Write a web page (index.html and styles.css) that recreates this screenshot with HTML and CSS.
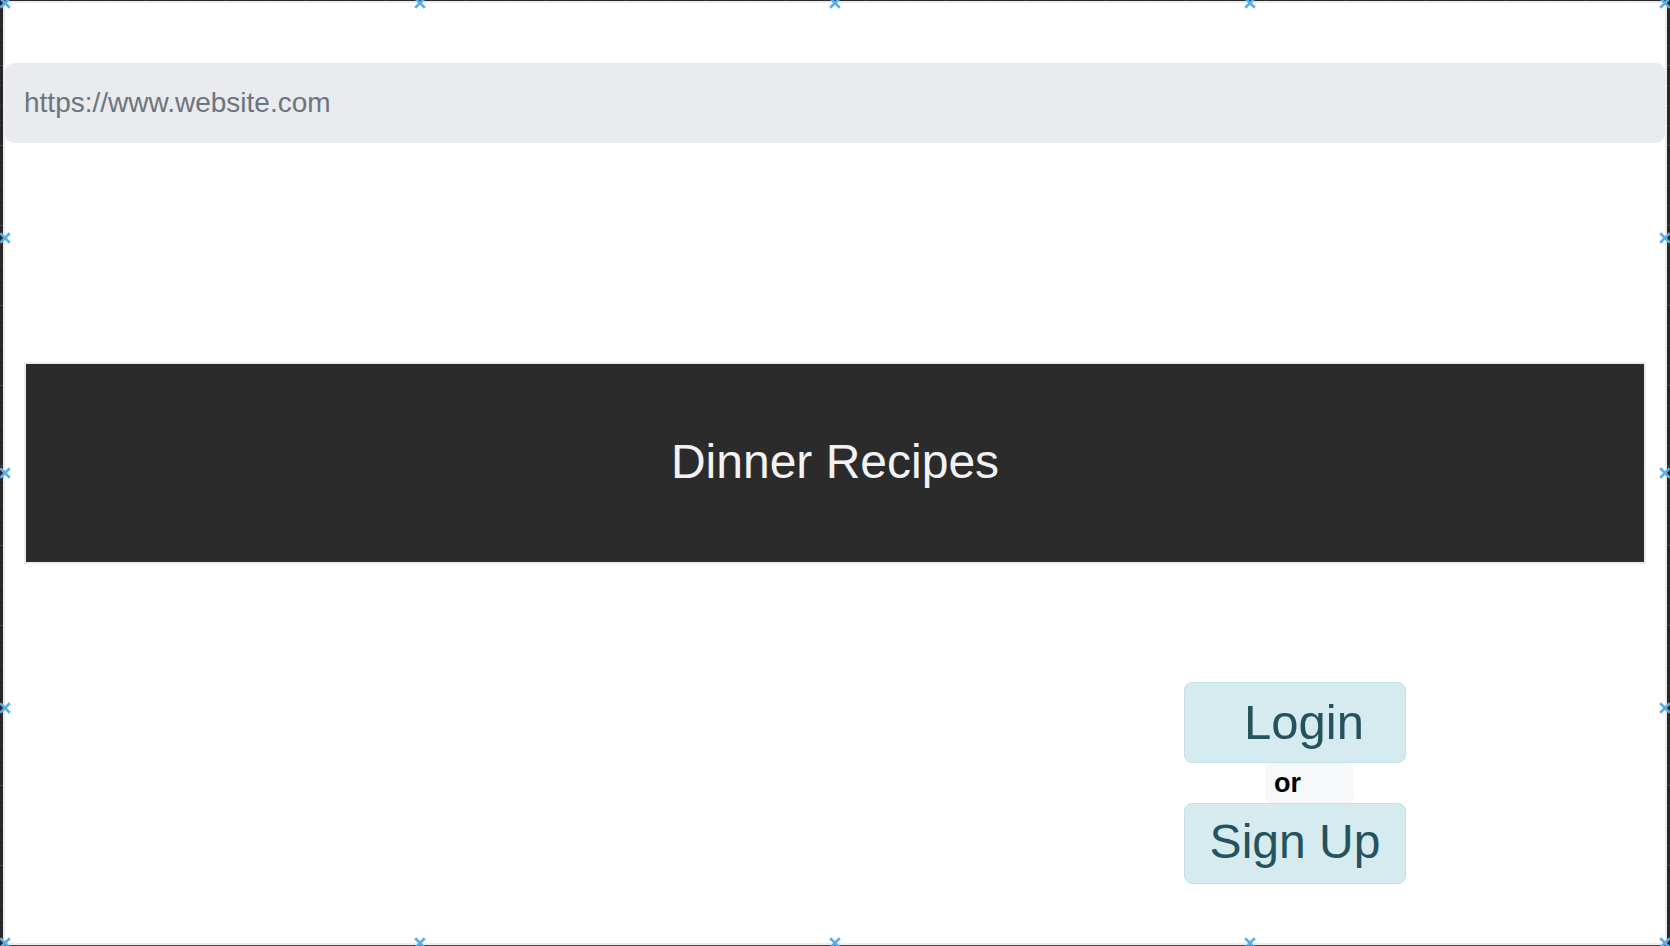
FILE: index.html
```html
<!DOCTYPE html>
<html lang="en">
<head>
<meta charset="utf-8">
<title>Dinner Recipes</title>
<link rel="stylesheet" href="styles.css">
</head>
<body>
<div class="frame">
  <div class="urlbar">https://www.website.com</div>
  <div class="banner">Dinner Recipes</div>
  <div class="actions">
    <div class="auth">
      <div class="btn btn-login">Login</div>
      <div class="or">or</div>
      <div class="btn btn-signup">Sign Up</div>
    </div>
  </div>
  <div class="handles">
    <svg class="h x0 y0" viewBox="0 0 10 10"><path d="M1 1L9 9M9 1L1 9"/></svg>
    <svg class="h x1 y0" viewBox="0 0 10 10"><path d="M1 1L9 9M9 1L1 9"/></svg>
    <svg class="h x2 y0" viewBox="0 0 10 10"><path d="M1 1L9 9M9 1L1 9"/></svg>
    <svg class="h x3 y0" viewBox="0 0 10 10"><path d="M1 1L9 9M9 1L1 9"/></svg>
    <svg class="h x4 y0" viewBox="0 0 10 10"><path d="M1 1L9 9M9 1L1 9"/></svg>
    <svg class="h x0 y4" viewBox="0 0 10 10"><path d="M1 1L9 9M9 1L1 9"/></svg>
    <svg class="h x1 y4" viewBox="0 0 10 10"><path d="M1 1L9 9M9 1L1 9"/></svg>
    <svg class="h x2 y4" viewBox="0 0 10 10"><path d="M1 1L9 9M9 1L1 9"/></svg>
    <svg class="h x3 y4" viewBox="0 0 10 10"><path d="M1 1L9 9M9 1L1 9"/></svg>
    <svg class="h x4 y4" viewBox="0 0 10 10"><path d="M1 1L9 9M9 1L1 9"/></svg>
    <svg class="h x0 y1" viewBox="0 0 10 10"><path d="M1 1L9 9M9 1L1 9"/></svg>
    <svg class="h x0 y2" viewBox="0 0 10 10"><path d="M1 1L9 9M9 1L1 9"/></svg>
    <svg class="h x0 y3" viewBox="0 0 10 10"><path d="M1 1L9 9M9 1L1 9"/></svg>
    <svg class="h x4 y1" viewBox="0 0 10 10"><path d="M1 1L9 9M9 1L1 9"/></svg>
    <svg class="h x4 y2" viewBox="0 0 10 10"><path d="M1 1L9 9M9 1L1 9"/></svg>
    <svg class="h x4 y3" viewBox="0 0 10 10"><path d="M1 1L9 9M9 1L1 9"/></svg>
  </div>
</div>
</body>
</html>
```

FILE: styles.css
```css
html, body {
  margin: 0;
  padding: 0;
  height: 946px;
  overflow: hidden;
}

body {
  background-color: #272727;
  background-image:
    linear-gradient(90deg, #4c4c4c 1px, transparent 1px),
    linear-gradient(#4c4c4c 1px, transparent 1px),
    linear-gradient(90deg, #363636 1px, transparent 1px),
    linear-gradient(#363636 1px, transparent 1px);
  background-size: 80px 80px, 80px 80px, 20px 20px, 20px 20px;
  background-position: 65px 65px, 65px 65px, 5px 5px, 5px 5px;
  font-family: "Liberation Sans", Arial, Helvetica, sans-serif;
  padding-top: 1px;
  box-sizing: border-box;
}

.frame {
  position: relative;
  margin-left: 3px;
  width: 1660px;
  height: 940px;
  border: 2px solid #ececec;
  background: #fff;
  display: flex;
  flex-direction: column;
}

.urlbar {
  margin-top: 60px;
  height: 80px;
  line-height: 80px;
  background: #e9ebee;
  border-radius: 9px;
  padding-left: 19px;
  font-size: 28px;
  color: #6c757d;
}

.banner {
  margin: 219px 19px 0;
  height: 202px;
  box-sizing: border-box;
  border: 2px solid #ececec;
  background: #2b2b2b;
  color: #f2f2f2;
  font-size: 48px;
  display: flex;
  align-items: center;
  justify-content: center;
  padding-bottom: 4px;
}

.actions {
  display: flex;
  justify-content: flex-end;
  padding-right: 259px;
  margin-top: 118px;
}

.auth {
  display: flex;
  flex-direction: column;
  width: 222px;
}

.btn {
  height: 79px;
  line-height: 79px;
  border: 1px solid #c2e2e8;
  background: #d5ebef;
  border-radius: 8px;
  color: #24535e;
  font-size: 48px;
  text-align: center;
}

.btn-login {
  padding-left: 18px;
  font-size: 49px;
}

.btn-signup {
  line-height: 75px;
}

.or {
  align-self: flex-start;
  margin-left: 81px;
  width: 80px;
  height: 40px;
  line-height: 40px;
  padding-left: 9px;
  background: #f7f8fa;
  border-radius: 7px;
  font-size: 27px;
  font-weight: bold;
  color: #000;
}

.handles {
  position: absolute;
  inset: 0;
  pointer-events: none;
}

.h {
  position: absolute;
  width: 12px;
  height: 12px;
  transform: translate(-50%, -50%);
  fill: none;
  stroke: #5aaee8;
  stroke-width: 2.2;
}

.x0 { left: 0; }
.x1 { left: 25%; }
.x2 { left: 50%; }
.x3 { left: 75%; }
.x4 { left: 100%; }
.y0 { top: 0; }
.y1 { top: 25%; }
.y2 { top: 50%; }
.y3 { top: 75%; }
.y4 { top: 100%; }
```
